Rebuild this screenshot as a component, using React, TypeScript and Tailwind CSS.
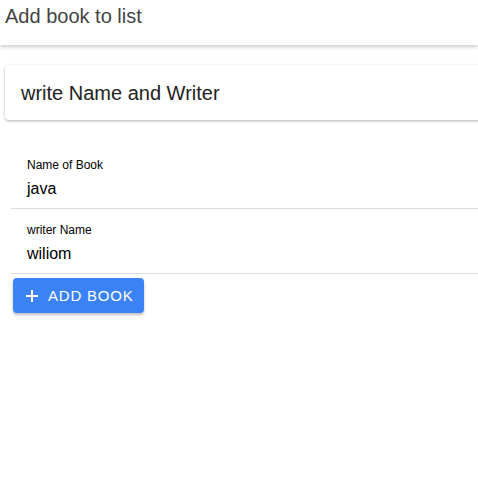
import React from "react";

export default function App() {
  return (
    <div className="w-[478px] h-[490px] overflow-hidden bg-white" style={{ fontFamily: '"Liberation Sans", Arial, sans-serif' }}>
      <div className="h-[45px] bg-white shadow-[0_2px_4px_rgba(0,0,0,0.2)] flex items-center pl-[5px]">
        <span className="text-[20px] text-[#444] leading-none -mt-[13px]">Add book to list</span>
      </div>
      <div className="pl-[5px] pt-[20px]">
        <div className="w-[520px] h-[55px] bg-white rounded-[4px] shadow-[0_1px_3px_rgba(0,0,0,0.3)] flex items-center pl-[16px]">
          <span className="text-[20px] text-[#222] leading-none">write Name and Writer</span>
        </div>
      </div>
      <div className="pl-[11px] pt-[38px]">
        <div className="border-b border-[#dcdcdc] pl-[16px] pb-[10px] w-[500px]">
          <div className="text-[12px] text-black leading-[14px]">Name of Book</div>
          <div className="text-[16px] text-black leading-[18px] mt-[8px]">java</div>
        </div>
        <div className="border-b border-[#dcdcdc] pl-[16px] pb-[10px] pt-[14px] w-[500px]">
          <div className="text-[12px] text-black leading-[14px]">writer Name</div>
          <div className="text-[16px] text-black leading-[18px] mt-[8px]">wiliom</div>
        </div>
        <div className="pl-[2px] pt-[4px]">
          <button className="h-[35px] w-[131px] bg-[#3b82f6] rounded-[4px] shadow-[0_2px_3px_rgba(0,0,0,0.25)] flex items-center pl-[12px] gap-[9px] text-white">
            <svg width="14" height="14" viewBox="0 0 14 14" fill="none" stroke="white" strokeWidth="2">
              <path d="M7 1v12M1 7h12" />
            </svg>
            <span className="text-[15px] tracking-[0.8px] leading-none">ADD BOOK</span>
          </button>
        </div>
      </div>
    </div>
  );
}
